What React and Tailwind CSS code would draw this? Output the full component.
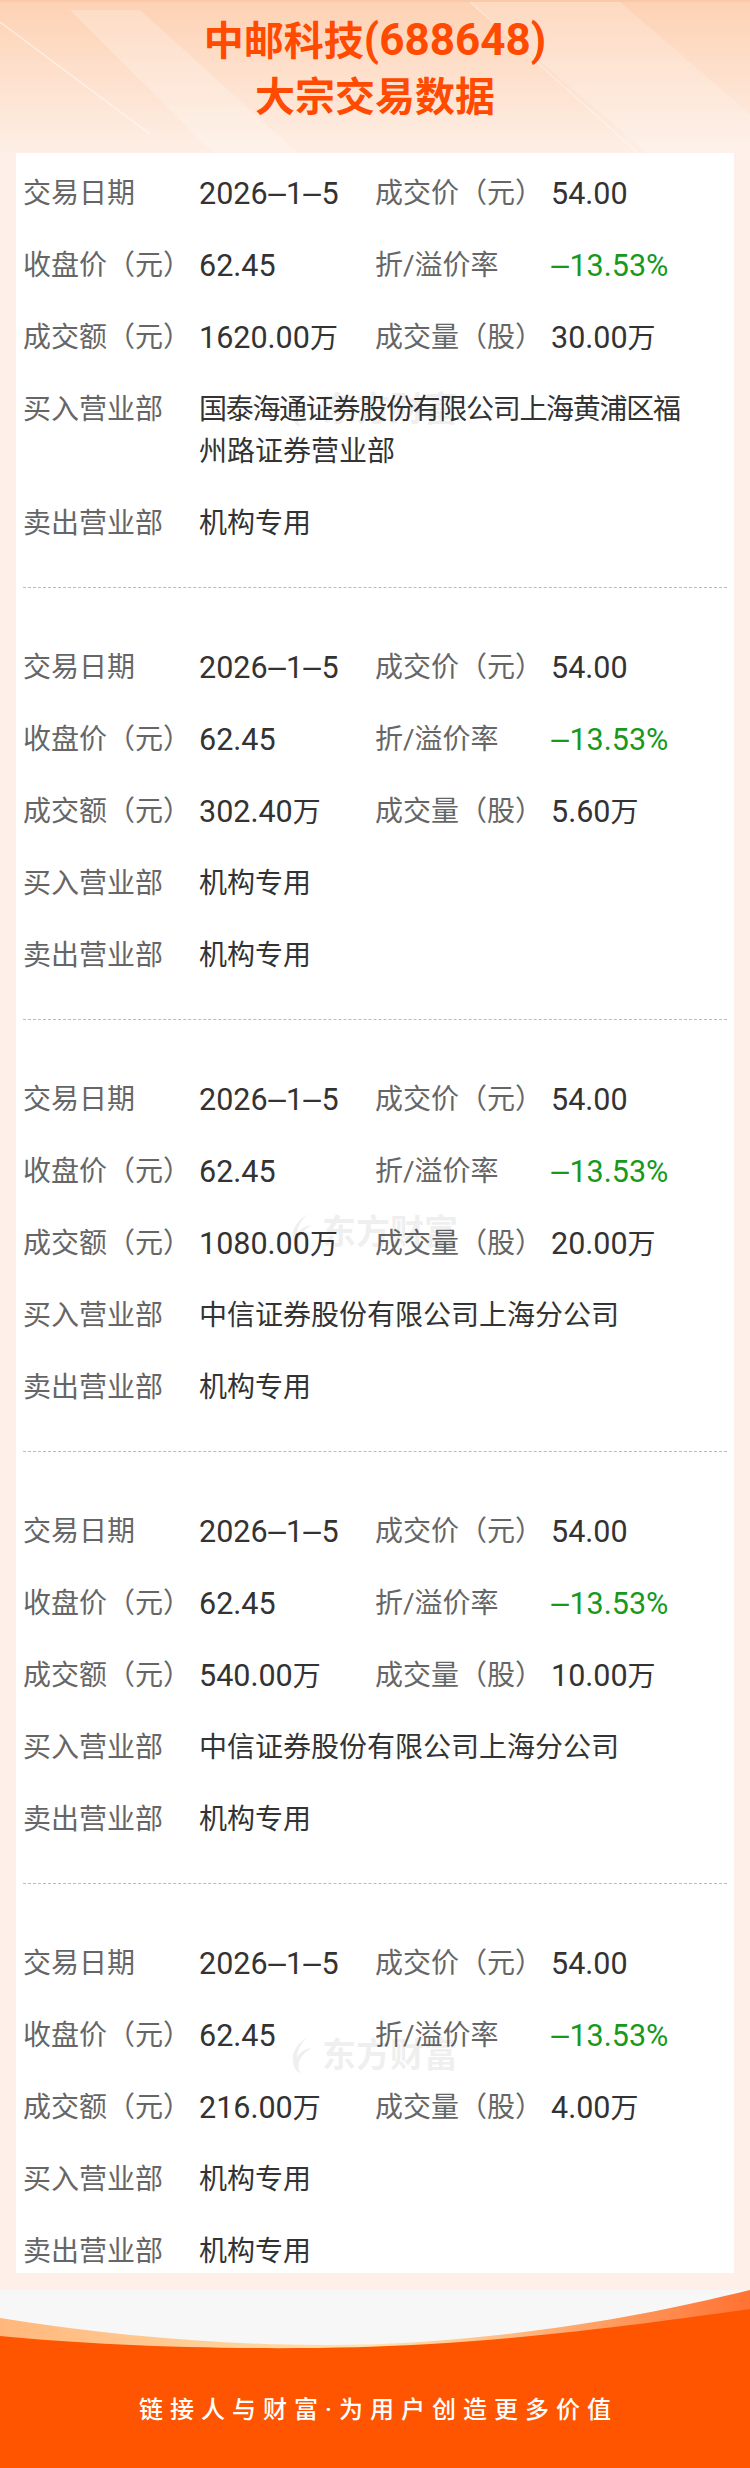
import React from "react";

const blocks = [
  { amt: "1620.00", vol: "30.00", buyer: ["国泰海通证券股份有限公司上海黄浦区福", "州路证券营业部"], seller: "机构专用" },
  { amt: "302.40", vol: "5.60", buyer: ["机构专用"], seller: "机构专用" },
  { amt: "1080.00", vol: "20.00", buyer: ["中信证券股份有限公司上海分公司"], seller: "机构专用" },
  { amt: "540.00", vol: "10.00", buyer: ["中信证券股份有限公司上海分公司"], seller: "机构专用" },
  { amt: "216.00", vol: "4.00", buyer: ["机构专用"], seller: "机构专用" },
];

function Dash() {
  return <span className="inline-block mx-[5px] scale-x-[2.4]">-</span>;
}

function withDashes(s) {
  const parts = s.split("-");
  const out = [];
  parts.forEach((p, i) => {
    if (i > 0) out.push(<Dash key={"d" + i} />);
    if (p) out.push(<span key={"p" + i}>{p}</span>);
  });
  return out;
}

function L({ children }) {
  return <div className="h-[42px] text-[28px] leading-[42px] text-[#666666] whitespace-nowrap">{children}</div>;
}

function V({ children, green }) {
  return (
    <div className={green ? "h-[42px] text-[30.5px] leading-[42px] text-[#17991b] whitespace-nowrap" : "h-[42px] text-[30.5px] leading-[42px] text-[#333333] whitespace-nowrap"}>
      {children}
    </div>
  );
}

function Wan() {
  return <span className="text-[28px] leading-[0]">万</span>;
}

function Block({ d, first, last }) {
  const pad = first ? "pt-[20px] pb-[42px] border-b border-dashed border-[#f6a880]" : last ? "pt-[59px]" : "pt-[59px] pb-[42px] border-b border-dashed border-[#f6a880]";
  return (
    <div className={pad}>
      <div className="flex flex-col gap-[30px]">
        <div className="grid grid-cols-4">
          <L>交易日期</L>
          <V>{withDashes("2026-1-5")}</V>
          <L>成交价（元）</L>
          <V>54.00</V>
        </div>
        <div className="grid grid-cols-4">
          <L>收盘价（元）</L>
          <V>62.45</V>
          <L>折/溢价率</L>
          <V green>{withDashes("-13.53%")}</V>
        </div>
        <div className="grid grid-cols-4">
          <L>成交额（元）</L>
          <V>
            {d.amt}
            <Wan />
          </V>
          <L>成交量（股）</L>
          <V>
            {d.vol}
            <Wan />
          </V>
        </div>
        <div className="grid grid-cols-4">
          <L>买入营业部</L>
          <div className="col-span-3 text-[28px] leading-[42px] text-[#333333]">
            {d.buyer.length > 1 ? (
              <>
                <div className="tracking-[-1.3px] whitespace-nowrap">{d.buyer[0]}</div>
                <div>{d.buyer[1]}</div>
              </>
            ) : (
              d.buyer[0]
            )}
          </div>
        </div>
        <div className="grid grid-cols-4">
          <L>卖出营业部</L>
          <div className="col-span-3 text-[28px] leading-[42px] text-[#333333]">{d.seller}</div>
        </div>
      </div>
    </div>
  );
}

function Watermark({ top }) {
  return (
    <div className="absolute left-[288px] flex items-center gap-[8px] pointer-events-none opacity-[0.06]" style={{ top }}>
      <svg width="26" height="38" viewBox="0 0 26 38">
        <path d="M20 1 C8 8 2 18 6 30 C7 33 9 36 12 37 C8 28 12 18 24 12 C16 13 11 17 9 22 C9 14 13 7 20 1 Z" fill="#000" />
      </svg>
      <span className="text-[34px] leading-[40px] font-bold text-black">东方财富</span>
    </div>
  );
}

export default function App() {
  return (
    <div className="relative w-[750px] min-h-[2468px] bg-[#fef0e8] font-[family-name:Roboto,Noto_Sans_CJK_SC,sans-serif]">
      <div className="relative h-[153px] bg-gradient-to-b from-[#fdd2b4] to-[#fdefe6] overflow-hidden border-t-2 border-[#fcc9a8]">
        <svg className="absolute inset-0" width="750" height="153" viewBox="0 0 750 153">
          <polygon points="70,8 140,8 300,153 215,153" fill="#ffffff" opacity="0.22" />
          <line x1="0" y1="20" x2="150" y2="132" stroke="#ffffff" strokeWidth="1.5" opacity="0.5" />
          <polygon points="470,0 620,0 750,112 750,153 650,153" fill="#ffffff" opacity="0.18" />
          <line x1="470" y1="0" x2="640" y2="153" stroke="#ffffff" strokeWidth="1.2" opacity="0.4" />
          <polygon points="0,60 750,60 750,66 0,66" fill="#ffffff" opacity="0.05" />
        </svg>
        <div className="relative pt-[10px] text-center text-[40px] leading-[56px] font-bold text-[#ff4a00]">
          <div>
            中邮科技<span className="text-[44px]">(688648)</span>
          </div>
          <div>大宗交易数据</div>
        </div>
      </div>
      <div className="mx-[16px] bg-white px-[7px]">
        {blocks.map((d, i) => (
          <Block key={i} d={d} first={i === 0} last={i === blocks.length - 1} />
        ))}
      </div>
      <Watermark top={389} />
      <Watermark top={1212} />
      <Watermark top={2035} />
      <div className="h-[17px]" />
      <div className="relative h-[178px] bg-[#f7f7f7]">
        <svg className="absolute inset-0" width="750" height="178" viewBox="0 0 750 178">
          <defs>
            <linearGradient id="band" x1="0" y1="0" x2="1" y2="0">
              <stop offset="0" stopColor="#ffb77c" />
              <stop offset="0.5" stopColor="#ffe3ae" />
              <stop offset="1" stopColor="#ff7232" />
            </linearGradient>
          </defs>
          <path d="M0,28 C150,52 300,60 420,52 C560,42 660,22 750,0 L750,178 L0,178 Z" fill="url(#band)" />
          <path d="M0,46 C120,58 300,62 430,54 C560,46 670,30 750,19 L750,178 L0,178 Z" fill="#ff5400" />
        </svg>
        <div className="relative pt-[104px] pl-[7px] text-center text-[24px] leading-[32px] font-medium tracking-[7px] text-white">
          链接人与财富·为用户创造更多价值
        </div>
      </div>
    </div>
  );
}
